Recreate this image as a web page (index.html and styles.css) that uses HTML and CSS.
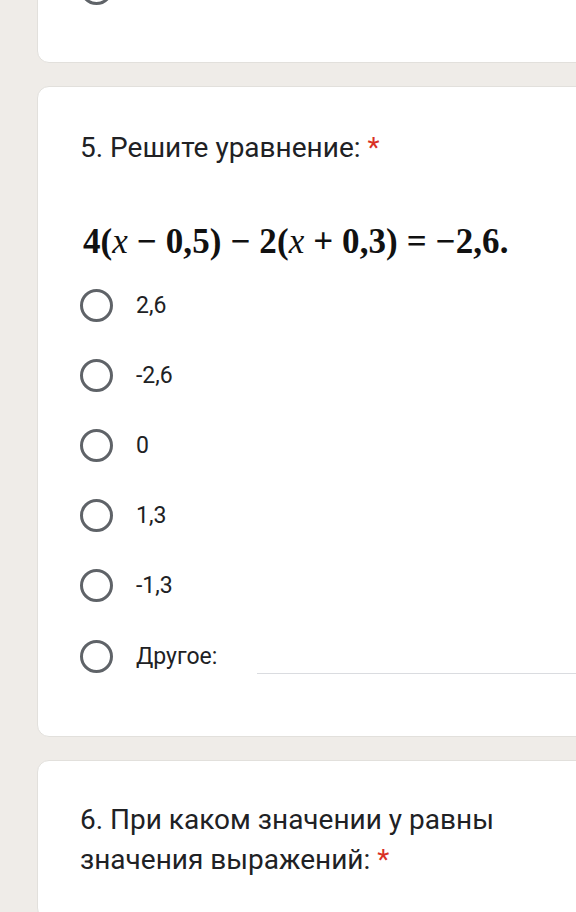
FILE: index.html
```html
<!DOCTYPE html>
<html lang="ru">
<head>
<meta charset="utf-8">
<link rel="stylesheet" href="styles.css">
</head>
<body>
<main class="page">
  <section class="card card-prev">
    <div class="option option-cut"><span class="radio"></span></div>
  </section>

  <section class="card card-q5">
    <h2 class="q-title">5. Решите уравнение: <span class="req">*</span></h2>
    <div class="equation">4(<i>x</i> − 0,5) − 2(<i>x</i> + 0,3) = −2,6.</div>
    <ul class="options">
      <li class="option"><span class="radio"></span><span class="label">2,6</span></li>
      <li class="option"><span class="radio"></span><span class="label">-2,6</span></li>
      <li class="option"><span class="radio"></span><span class="label">0</span></li>
      <li class="option"><span class="radio"></span><span class="label">1,3</span></li>
      <li class="option"><span class="radio"></span><span class="label">-1,3</span></li>
      <li class="option other"><span class="radio"></span><span class="label">Другое:</span><span class="other-line"></span></li>
    </ul>
  </section>

  <section class="card card-q6">
    <h2 class="q-title">6. При каком значении у равны значения выражений: <span class="req">*</span></h2>
  </section>
</main>
</body>
</html>
```

FILE: styles.css
```css
html, body {
  margin: 0;
  padding: 0;
  overflow: hidden;
  height: 912px;
}
body {
  background: #efece8;
  font-family: Roboto, "Noto Sans", "Liberation Sans", sans-serif;
  color: #202124;
}
.page {
  display: flex;
  flex-direction: column;
  gap: 23px;
  padding-left: 37px;
}
.card {
  background: #ffffff;
  border: 1px solid #e2e0dc;
  border-radius: 12px;
  width: 600px;
  box-sizing: border-box;
  padding-left: 42px;
}
.card-prev {
  margin-top: -41px;
  height: 104px;
  padding-top: 12px;
}
.card-q5 {
  padding-top: 41px;
  padding-bottom: 44px;
}
.card-q6 {
  padding-top: 39px;
  height: 160px;
}
.q-title {
  margin: 0;
  font-weight: 400;
  font-size: 28px;
  line-height: 40px;
  width: 440px;
}
.card-q6 .q-title {
  width: 420px;
}
.req {
  color: #d93025;
}
.equation {
  margin-top: 50px;
  margin-left: 3px;
  font-family: "Liberation Serif", "DejaVu Serif", serif;
  font-weight: 700;
  font-size: 35px;
  letter-spacing: 0.1px;
  line-height: 48px;
  color: #111;
  white-space: nowrap;
}
.equation i {
  font-style: italic;
  font-weight: 400;
}
.options {
  list-style: none;
  margin: 4px 0 0;
  padding: 0;
}
.option {
  display: flex;
  align-items: center;
  height: 70px;
}
.option.option-cut {
  height: auto;
}
.option.other {
  height: 72px;
}
.radio {
  width: 33px;
  height: 33px;
  box-sizing: border-box;
  border: 3px solid #5f6368;
  border-radius: 50%;
  flex: none;
}
.label {
  margin-left: 23px;
  font-size: 23px;
  color: #202124;
}
.other-line {
  margin-left: 40px;
  margin-top: 34px;
  flex: 1;
  height: 1px;
  background: #dadce0;
}
```
